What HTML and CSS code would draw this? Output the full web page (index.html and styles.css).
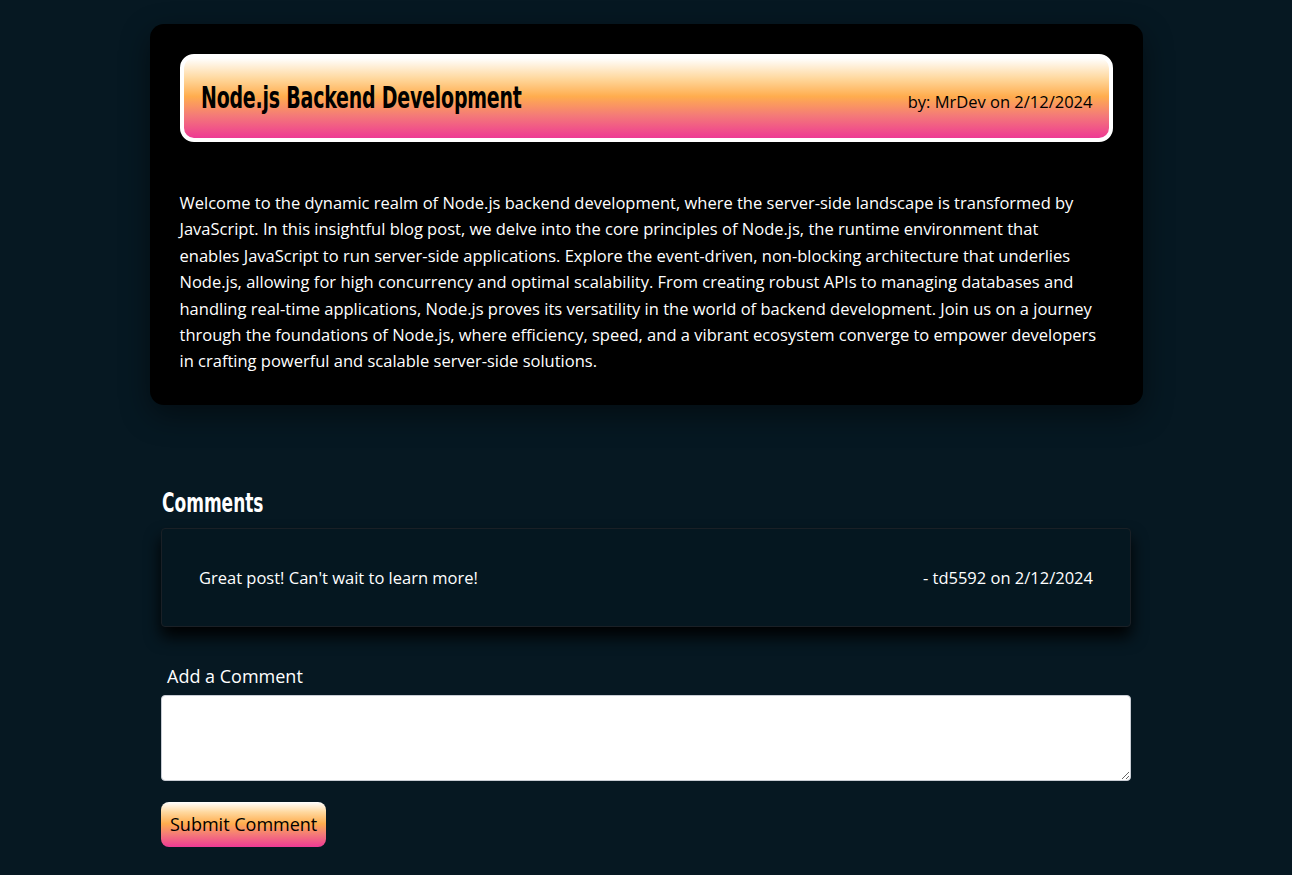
FILE: index.html
```html
<!DOCTYPE html>
<html lang="en">
<head>
<meta charset="utf-8">
<title>Node.js Backend Development</title>
<link rel="stylesheet" href="styles.css">
</head>
<body>
<main class="page">
  <article class="post">
    <header class="post-header">
      <h1 class="post-title">Node.js Backend Development</h1>
      <span class="post-meta">by: MrDev on 2/12/2024</span>
    </header>
    <p class="post-body">Welcome to the dynamic realm of Node.js backend development, where the server-side landscape is transformed by JavaScript. In this insightful blog post, we delve into the core principles of Node.js, the runtime environment that enables JavaScript to run server-side applications. Explore the event-driven, non-blocking architecture that underlies Node.js, allowing for high concurrency and optimal scalability. From creating robust APIs to managing databases and handling real-time applications, Node.js proves its versatility in the world of backend development. Join us on a journey through the foundations of Node.js, where efficiency, speed, and a vibrant ecosystem converge to empower developers in crafting powerful and scalable server-side solutions.</p>
  </article>

  <section class="comments">
    <h2 class="comments-title">Comments</h2>
    <div class="comment">
      <span class="comment-text">Great post! Can't wait to learn more!</span>
      <span class="comment-meta">- td5592 on 2/12/2024</span>
    </div>
    <form class="comment-form">
      <label class="comment-label" for="comment">Add a Comment</label>
      <textarea id="comment" class="comment-input"></textarea>
      <button type="button" class="submit-btn">Submit Comment</button>
    </form>
  </section>
</main>
</body>
</html>
```
FILE: styles.css
```css
html, body {
  margin: 0;
  padding: 0;
}
body {
  background: #061822;
  color: #fff;
  font-family: "Open Sans", "Noto Sans", sans-serif;
  min-height: 875px;
}
.page {
  width: 993px;
  margin: 0 auto;
  padding-top: 24px;
}
.post {
  background: #000;
  border-radius: 14px;
  padding: 30px 30px 30px 30px;
  box-shadow: 0 10px 30px rgba(0, 0, 0, 0.45);
}
.post-header {
  display: flex;
  align-items: center;
  justify-content: space-between;
  height: 88px;
  box-sizing: border-box;
  border: 4px solid #fff;
  border-radius: 14px;
  padding: 0 16px 0 17px;
  background: linear-gradient(to bottom, #ffffff 0%, #ffd9a0 25%, #ffad4e 48%, #f47a78 72%, #ee3a94 100%);
  color: #000;
}
.post-title {
  margin: 0 0 2px 0;
  font-family: "DejaVu Sans Condensed", "DejaVu Sans", sans-serif;
  font-stretch: condensed;
  font-weight: 700;
  font-size: 31px;
  letter-spacing: -0.3px;
  transform: scaleX(0.68);
  transform-origin: left center;
  white-space: nowrap;
}
.post-meta {
  font-size: 16.5px;
  padding-top: 6px;
}
.post-body {
  margin: 48px 12px 0 0;
  font-size: 16.5px;
  line-height: 26.4px;
}
.comments {
  width: 970px;
  margin: 0 auto;
  padding-top: 82px;
}
.comments-title {
  margin: 0 0 10px 1px;
  font-family: "DejaVu Sans Condensed", "DejaVu Sans", sans-serif;
  font-stretch: condensed;
  font-weight: 700;
  font-size: 27px;
  line-height: 31px;
  transform: scaleX(0.7);
  transform-origin: left center;
  white-space: nowrap;
}
.comment {
  display: flex;
  justify-content: space-between;
  align-items: center;
  height: 99px;
  box-sizing: border-box;
  padding: 0 37px 0 37px;
  background: #051720;
  border: 1px solid #1a2026;
  border-radius: 4px;
  box-shadow: 0 10px 16px rgba(0, 0, 0, 0.95);
  font-size: 16.5px;
}
.comment-form {
  display: flex;
  flex-direction: column;
  align-items: flex-start;
  padding-top: 36px;
}
.comment-label {
  margin-left: 6px;
  font-size: 18px;
  line-height: 26px;
  margin-bottom: 6px;
}
.comment-input {
  width: 100%;
  height: 86px;
  box-sizing: border-box;
  border: 1px solid #c8ccd4;
  border-radius: 4px;
  background: #fff;
  resize: vertical;
}
.submit-btn {
  margin-top: 21px;
  height: 45px;
  padding: 0 9px;
  border: none;
  border-radius: 8px;
  background: linear-gradient(to bottom, #ffffff 0%, #ffd9a0 22%, #ffad4e 48%, #f47a78 72%, #ee3a94 100%);
  color: #000;
  font-family: "Open Sans", "Noto Sans", sans-serif;
  font-size: 18px;
  cursor: pointer;
}
```
